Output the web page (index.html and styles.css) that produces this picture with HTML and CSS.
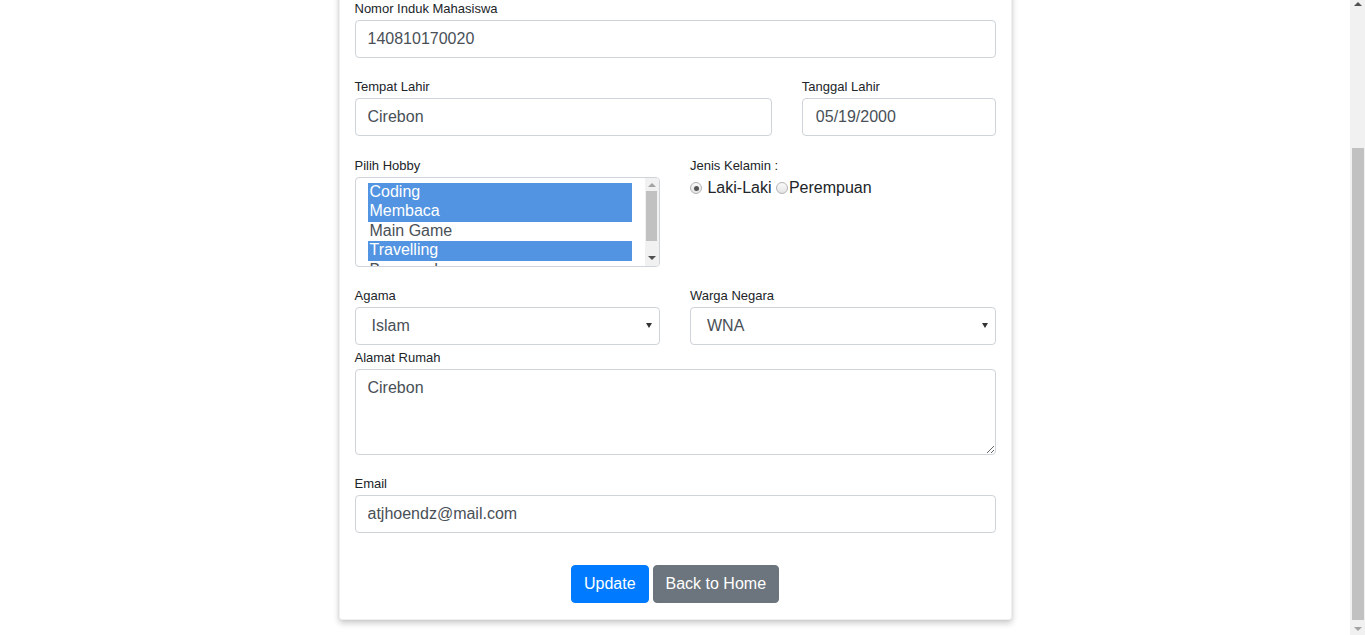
FILE: index.html
```html
<!DOCTYPE html>
<html lang="id">
<head>
<meta charset="utf-8">
<title>Edit Data Mahasiswa</title>
<link rel="stylesheet" href="styles.css">
</head>
<body>
<div class="page">
  <div class="card">
    <h3 class="card-title">Edit Data Mahasiswa</h3>
    <form class="form">
      <div class="group">
        <label class="lbl">Nomor Induk Mahasiswa</label>
        <input class="control" type="text" value="140810170020">
      </div>
      <div class="row row-8-4 group-tl">
        <div>
          <label class="lbl">Tempat Lahir</label>
          <input class="control" type="text" value="Cirebon">
        </div>
        <div>
          <label class="lbl">Tanggal Lahir</label>
          <input class="control date" type="text" value="05/19/2000">
        </div>
      </div>
      <div class="row row-6-6 group">
        <div>
          <label class="lbl">Pilih Hobby</label>
          <div class="listbox" role="listbox" aria-multiselectable="true">
            <div class="list">
              <div class="opt sel" role="option" aria-selected="true">Coding</div>
              <div class="opt sel" role="option" aria-selected="true">Membaca</div>
              <div class="opt" role="option">Main Game</div>
              <div class="opt sel" role="option" aria-selected="true">Travelling</div>
              <div class="opt" role="option">Bersepeda</div>
            </div>
            <div class="sb">
              <span class="sb-up"></span>
              <span class="sb-thumb"></span>
              <span class="sb-down"></span>
            </div>
          </div>
        </div>
        <div>
          <label class="lbl">Jenis Kelamin :</label>
          <div class="radios">
            <label class="radio"><input type="radio" name="jk" checked> Laki-Laki</label>
            <label class="radio"><input type="radio" name="jk">Perempuan</label>
          </div>
        </div>
      </div>
      <div class="row row-6-6 group-tight">
        <div>
          <label class="lbl">Agama</label>
          <div class="select-wrap">
            <select class="control single">
              <option selected>Islam</option>
              <option>Kristen</option>
              <option>Katolik</option>
              <option>Hindu</option>
              <option>Budha</option>
            </select>
          </div>
        </div>
        <div>
          <label class="lbl">Warga Negara</label>
          <div class="select-wrap">
            <select class="control single">
              <option>WNI</option>
              <option selected>WNA</option>
            </select>
          </div>
        </div>
      </div>
      <div class="group">
        <label class="lbl">Alamat Rumah</label>
        <textarea class="control area" rows="3">Cirebon</textarea>
      </div>
      <div class="group-last">
        <label class="lbl">Email</label>
        <input class="control" type="email" value="atjhoendz@mail.com">
      </div>
      <div class="actions">
        <button type="button" class="btn btn-primary">Update</button>
        <button type="button" class="btn btn-secondary">Back to Home</button>
      </div>
    </form>
  </div>
</div>
<div class="page-sb" aria-hidden="true">
  <span class="psb-up"></span>
  <span class="psb-thumb"></span>
  <span class="psb-down"></span>
</div>
<script src="script.js"></script>
</body>
</html>
```
FILE: styles.css
```css
html, body {
  margin: 0;
  padding: 0;
  background: #fff;
}
body {
  font-family: "Liberation Sans", Arial, sans-serif;
  font-size: 16px;
  color: #212529;
}
.page {
  padding: 40px 0 15px;
  margin-right: 15px;
}
.card {
  width: 673px;
  box-sizing: border-box;
  margin: 0 auto;
  padding: 38px 15px 16px;
  background: #fff;
  border: 1px solid rgba(0, 0, 0, 0.06);
  border-radius: 3px;
  box-shadow: 0 3px 6px rgba(0, 0, 0, 0.22), 0 0 2px rgba(0, 0, 0, 0.08);
}
.card-title {
  margin: 0 0 20px;
  font-size: 28px;
  line-height: 34px;
  font-weight: 500;
  text-align: center;
}
.lbl {
  display: block;
  font-size: 13px;
  line-height: 17px;
  margin-bottom: 3px;
  color: #212529;
}
.group { margin-bottom: 20px; }
.group-tl { margin-bottom: 21px; }
.group-tight { margin-bottom: 4px; }
.group-last { margin-bottom: 32px; }
.row { display: grid; column-gap: 30px; }
.row-8-4 { grid-template-columns: calc((100% + 30px) * 2 / 3 - 30px) 1fr; }
.row-6-6 { grid-template-columns: 1fr 1fr; }
.control {
  display: block;
  width: 100%;
  box-sizing: border-box;
  height: 38px;
  padding: 6px 12px;
  font-family: "Liberation Sans", Arial, sans-serif;
  font-size: 16px;
  line-height: 24px;
  color: #495057;
  background: #fff;
  border: 1px solid #ced4da;
  border-radius: 4px;
  margin: 0;
  outline: none;
}
.date { padding-left: 13px; }

/* multi select listbox */
.listbox {
  display: flex;
  height: 90px;
  box-sizing: border-box;
  border: 1px solid #ced4da;
  border-radius: 4px;
  overflow: hidden;
  background: #fff;
}
.list {
  flex: 1;
  min-width: 0;
  padding: 5px 13px 0 12px;
  overflow: hidden;
  font-size: 16px;
  color: #495057;
}
.opt {
  height: 19.4px;
  line-height: 18.4px;
  padding: 0 2px 1px;
  box-sizing: border-box;
  white-space: nowrap;
}
.opt.sel {
  background: #5294e2;
  color: #fff;
}
.sb {
  width: 14px;
  flex: none;
  background: #f1f1f1;
  position: relative;
}
.sb-up, .sb-down {
  position: absolute;
  left: 3px;
  width: 0;
  height: 0;
  border-left: 4px solid transparent;
  border-right: 4px solid transparent;
}
.sb-up {
  top: 5px;
  border-bottom: 4px solid #a3a3a3;
}
.sb-down {
  bottom: 6px;
  border-top: 4px solid #505050;
}
.sb-thumb {
  position: absolute;
  left: 1px;
  right: 2px;
  top: 13px;
  height: 50px;
  background: #c1c1c1;
}

/* single selects */
.select-wrap { position: relative; }
.select-wrap::after {
  content: "";
  position: absolute;
  right: 8px;
  top: 16px;
  border-left: 3px solid transparent;
  border-right: 3px solid transparent;
  border-top: 5px solid #333;
  pointer-events: none;
}
.single {
  appearance: none;
  -webkit-appearance: none;
  padding-left: 16px;
}
.area {
  height: 86px;
  resize: vertical;
}
.radios {
  padding-top: 1px;
  font-size: 16px;
  line-height: 20px;
  color: #212529;
}
.radio input {
  appearance: none;
  -webkit-appearance: none;
  width: 12px;
  height: 12px;
  margin: 0 1px 0 0;
  border: 1px solid #b3b3b3;
  border-radius: 50%;
  background: linear-gradient(#fafafa, #e4e4e4);
  box-sizing: border-box;
  vertical-align: -1px;
  position: relative;
}
.radio input:checked::after {
  content: "";
  position: absolute;
  left: 2.5px;
  top: 2.5px;
  width: 5px;
  height: 5px;
  border-radius: 50%;
  background: #555;
}
.actions {
  display: flex;
  justify-content: center;
  gap: 4px;
}
.btn {
  font-family: "Liberation Sans", Arial, sans-serif;
  font-size: 16px;
  line-height: 24px;
  height: 38px;
  padding: 6px 12px;
  border: 1px solid transparent;
  border-radius: 4px;
  color: #fff;
  cursor: pointer;
}
.btn-primary { background: #007bff; border-color: #007bff; }
.btn-secondary { background: #6c757d; border-color: #6c757d; }

/* page scrollbar (drawn over the right edge) */
.page-sb {
  position: fixed;
  top: 0;
  right: 0;
  bottom: 0;
  width: 15px;
  background: #f1f1f1;
}
.psb-up, .psb-down {
  position: absolute;
  left: 4px;
  width: 0;
  height: 0;
  border-left: 4px solid transparent;
  border-right: 4px solid transparent;
}
.psb-up {
  top: 2px;
  border-bottom: 4px solid #505050;
}
.psb-down {
  bottom: 4px;
  border-top: 4px solid #a3a3a3;
}
.psb-thumb {
  position: absolute;
  left: 2px;
  right: 1px;
  top: 148px;
  bottom: 15px;
  background: #c1c1c1;
}
```
FILE: script.js
```js
window.scrollTo(0, document.documentElement.scrollHeight);
```
